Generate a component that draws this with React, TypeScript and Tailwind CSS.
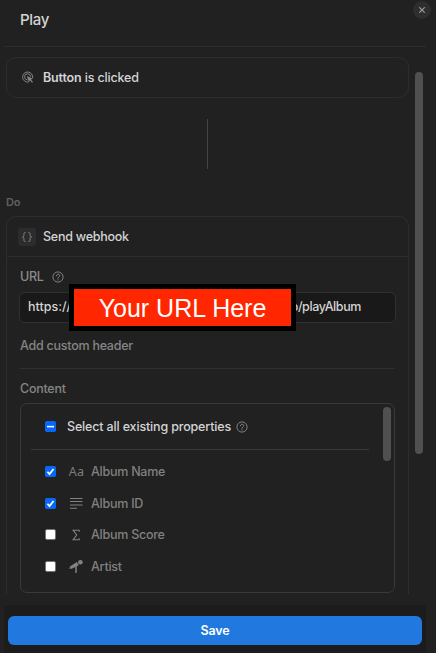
import type { ReactNode } from "react";

function HelpIcon() {
  return (
    <svg width="12" height="12" viewBox="0 0 12 12" fill="none" stroke="#8b8b8b">
      <circle cx="6" cy="6" r="5.1" strokeWidth="0.9" />
      <path d="M4.4 4.8c0-2.1 3.3-2.1 3.3-.1 0 1.3-1.7 1.2-1.7 2.5" strokeWidth="1" strokeLinecap="round" />
      <circle cx="6" cy="8.8" r=".65" fill="#8b8b8b" stroke="none" />
    </svg>
  );
}

function ClickIcon() {
  return (
    <svg width="12" height="13" viewBox="0 0 12 13" fill="none" stroke="#888888" strokeWidth="0.95" strokeLinecap="round">
      <path d="M6.6 11.1A5.1 5.1 0 1 1 10.7 7" />
      <path d="M5.2 8.9A3.1 3.1 0 1 1 8.7 5.4" />
      <path d="M4.9 5 6.9 11l1.1-1.7 2 2.5 1-.8-2-2.4 1.7-.8z" fill="#888888" stroke="none" />
    </svg>
  );
}

function Checkbox({ state }: { state: "on" | "off" | "mixed" }) {
  if (state === "off") {
    return <span className="h-[11px] w-[11px] shrink-0 rounded-[2px] border border-[#767676] bg-white" />;
  }
  return (
    <svg className="shrink-0" width="11" height="11" viewBox="0 0 11 11" fill="none">
      <rect width="11" height="11" rx="1.8" fill="#0768f8" />
      {state === "on" ? (
        <path d="M2.4 5.8 4.5 8.1 8.5 2.9" stroke="white" strokeWidth="1.7" />
      ) : (
        <path d="M2 5.6H9" stroke="white" strokeWidth="1.5" />
      )}
    </svg>
  );
}

const rows: { label: string; checked: boolean; height: string; icon: ReactNode }[] = [
  {
    label: "Album Name",
    checked: true,
    height: "h-8",
    icon: <span className="pt-0.5 pl-px text-[12.5px] leading-none tracking-[0.3px] text-[#7d7d7d] [font-family:'Noto_Sans',sans-serif]">Aa</span>,
  },
  {
    label: "Album ID",
    checked: true,
    height: "h-8",
    icon: (
      <svg width="13" height="11" viewBox="0 0 13 11" fill="#828282">
        <path d="M0 0h12.5v1H0zM0 3h12.5v1H0zM0 6.5h12.5v1H0zM0 9.8h7v1H0z" />
      </svg>
    ),
  },
  {
    label: "Album Score",
    checked: false,
    height: "h-[31px]",
    icon: (
      <svg width="12" height="12" viewBox="0 0 12 12" fill="none" stroke="#828282" strokeWidth="1.1">
        <path d="M9.2 2.8V1.2H3.1L6.7 6 3.1 10.8H9.2V9.2" />
      </svg>
    ),
  },
  {
    label: "Artist",
    checked: false,
    height: "h-8",
    icon: (
      <svg width="14" height="13" viewBox="0 0 14 13" fill="#828282">
        <circle cx="11.4" cy="2.3" r="2.3" />
        <path d="M7.9 2 9.8 5.3 7.8 6.2V13H6.3V7.1L2.2 9.1l-.4-.8-1.2.6L0 7.9l1.2-.7-.3-.8z" />
      </svg>
    ),
  },
];

export default function App() {
  return (
    <div className="flex h-[653px] w-[436px] flex-col overflow-hidden bg-[#212121] text-[12.5px] leading-4 text-[#d4d4d4] [font-family:Inter,sans-serif]">
      <header className="ml-1 flex h-[47px] w-[432px] shrink-0 items-start">
        <div className="h-[47px] w-[422px] shrink-0 border-b border-[#2d2d2d] pt-[10px] pl-4">
          <h1 className="text-[15px] leading-5 font-medium tracking-[-0.3px]">Play</h1>
        </div>
        <button aria-label="Close" className="mt-px -ml-[13px] flex h-[18px] w-[18px] shrink-0 items-center justify-center rounded-full bg-[#2e2e2e]">
          <svg width="6" height="6" viewBox="0 0 6 6" stroke="#a0a0a0" strokeWidth="1.1">
            <path d="M.3.3 5.7 5.7M5.7.3.3 5.7" />
          </svg>
        </button>
      </header>

      <div className="flex h-[558px] shrink-0 pl-[6px]">
        <main className="w-[403px] pt-[10px]">
          <section className="flex h-[41px] items-center rounded-[10px] border border-[#2d2d2d] pl-[15px]">
            <ClickIcon />
            <p className="ml-[9px] font-medium tracking-[-0.16px]">
              <span className="font-semibold">Button</span> is clicked
            </p>
          </section>
          <div className="mt-[21px] ml-[201px] h-[50px] w-px bg-[#454545]" />
          <h2 className="mt-[25px] text-[11px] leading-4 font-semibold tracking-[-0.3px] text-[#606060]">Do</h2>

          <section className="mt-[6px] h-[378px] rounded-t-[10px] border-x border-t border-[#2d2d2d]">
            <div className="flex h-10 items-center border-b border-[#2d2d2d] pl-[11px]">
              <span className="flex h-[18px] w-[18px] items-center justify-center rounded-[3px] bg-[#2c2c2c]">
                <svg width="10" height="10" viewBox="0 0 10 10" fill="none" stroke="#858585" strokeWidth="0.9">
                  <path d="M3.7.6H3Q1.9.6 1.9 1.7v1.9Q1.9 5 .4 5q1.5 0 1.5 1.4v1.9Q1.9 9.4 3 9.4h.7M6.3.6H7q1.1 0 1.1 1.1v1.9Q8.1 5 9.6 5 8.1 5 8.1 6.4v1.9Q8.1 9.4 7 9.4h-.7" />
                </svg>
              </span>
              <p className="ml-[7px] font-medium tracking-[-0.25px]">Send webhook</p>
            </div>
            <div className="pl-3">
              <div className="mt-3 flex h-4 items-center text-[#8b8b8b]">
                <span className="w-[25px] pl-px font-medium tracking-[-0.35px]">URL</span>
                <span className="ml-2"><HelpIcon /></span>
              </div>
              <div className="relative mt-[7px] flex h-[31px] w-[377px] items-center justify-between rounded-[6px] border border-[#303030] bg-[#191919] pr-[34px] pl-2">
                <span className="-mt-0.5 font-medium">https://</span>
                <span className="-mt-0.5 font-medium tracking-[-0.4px]">o/playAlbum</span>
                <div className="absolute -top-[9px] left-[49px] flex h-[47px] w-[227px] items-center justify-center border-[5px] border-black bg-[#ff2600] pt-0.5 text-[25px] leading-none text-white [font-family:'Liberation_Sans',Arial,sans-serif]">
                  Your URL Here
                </div>
              </div>
              <p className="mt-[15px] ml-px font-medium tracking-[-0.25px] text-[#858585]">Add custom header</p>
              <div className="mt-[14px] ml-px h-px w-[375px] bg-[#303030]" />
              <p className="mt-3 ml-px font-medium tracking-[-0.25px] text-[#858585]">Content</p>
              <div className="mt-[6px] ml-px flex h-[190px] w-[375px] justify-between rounded-[7px] border border-[#393939] pr-[3px] pl-[10px]">
                <div className="w-[338px]">
                  <div className="flex h-[46px] items-center border-b border-[#393939] pl-[14px]">
                    <Checkbox state="mixed" />
                    <span className="ml-[11px] font-medium tracking-[-0.16px]">Select all existing properties</span>
                    <span className="ml-[5px]"><HelpIcon /></span>
                  </div>
                  <div className="pt-[5px]">
                    {rows.map((row) => (
                      <div key={row.label} className={`flex items-center pl-[14px] text-[#808080] ${row.height}`}>
                        <Checkbox state={row.checked ? "on" : "off"} />
                        <span className="ml-3 flex w-4 shrink-0 justify-center">{row.icon}</span>
                        <span className="ml-[7px] pt-px font-medium tracking-[-0.26px]">{row.label}</span>
                      </div>
                    ))}
                  </div>
                </div>
                <div className="mt-[3px] h-[54px] w-2 rounded-full bg-[#505050]" />
              </div>
            </div>
          </section>
        </main>
        <div className="mt-[25px] ml-[6px] h-[382px] w-2 rounded-full bg-[#505050]" />
      </div>

      <footer className="ml-1 h-12 w-[422px] shrink-0 bg-[#1c1c1c] px-1 pt-[11px]">
        <button className="flex h-[29px] w-full items-center justify-center rounded-[6px] bg-[#2178df] font-semibold tracking-[-0.1px] text-white">Save</button>
      </footer>
    </div>
  );
}
